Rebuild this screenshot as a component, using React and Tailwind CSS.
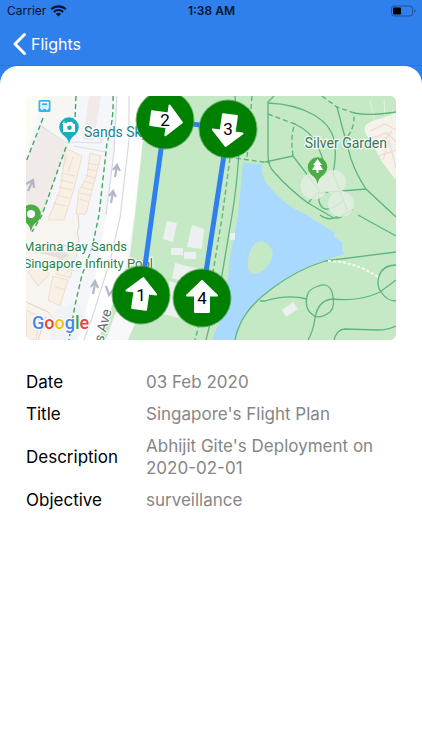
const PATH = "#5fb57f";

function StatusBar() {
  return (
    <div className="grid h-[22px] grid-cols-3 items-center pl-[7px] pr-[6px] text-[12px] text-[#06142b]">
      <div className="flex items-center gap-1">
        <span>Carrier</span>
        <svg width="17" height="12" viewBox="0 0 17 12" fill="none" stroke="#06142b" aria-hidden="true">
          <path d="M1.2 4.3A10.6 10.6 0 0 1 15.8 4.3" strokeWidth="2.1" />
          <path d="M3.8 7A6.8 6.8 0 0 1 13.2 7" strokeWidth="2" />
          <path d="M8.5 11.6L5.9 9A3.8 3.8 0 0 1 11.1 9Z" fill="#06142b" stroke="none" />
        </svg>
      </div>
      <span className="text-center font-semibold">1:38 AM</span>
      <svg className="justify-self-end" width="26" height="12" viewBox="0 0 26 12" aria-hidden="true">
        <rect x="1.500" y="1" width="21" height="10" rx="2.5" fill="none" stroke="#1d519b" />
        <rect x="3" y="2.500" width="8" height="7" rx="1" fill="#000" />
        <path d="M24 4.300v3.400q1.500-.4 1.500-1.700t-1.500-1.700" fill="#1d519b" />
      </svg>
    </div>
  );
}

function Marker({ x, y, angle, label }) {
  return (
    <g transform={`translate(${x} ${y})`}>
      <circle r="29.500" fill="#4d9a4d" opacity=".7" />
      <circle r="28.500" fill="#008000" />
      <path
        d="M0-17L15-2.500H7V14H-7V-2.500H-15Z"
        fill="#fff"
        stroke="#fff"
        strokeWidth="2"
        strokeLinejoin="round"
        transform={`rotate(${angle})`}
      />
      <text y="6" textAnchor="middle" fontSize="17" fill="#000">{label}</text>
    </g>
  );
}

function FlightMap() {
  return (
    <svg
      className="block w-full rounded-[6px] font-[Roboto,sans-serif]"
      viewBox="0 0 370 244"
      role="img"
      aria-label="Map of flight plan"
    >
      <rect width="370" height="244" fill="#f5f6f9" />

      {/* resort blocks */}
      <path d="M0 0H50L40 51L15 30L18 0Z" fill="#f6f7f2" />
      <path d="M16 29L42 50L12 130L0 112V66Z" fill="#f0ebe8" />
      <path d="M63 0H75L68 44H57Z" fill="#f0ebe8" />
      <path d="M17 0L0 60V0Z" fill="#fcfbf4" />
      <path d="M0 135L22 120L52 122L46 165L30 205L20 244H0Z" fill="#f8f5f1" />
      <g fill="#f8f0e4" stroke="#ead9c6" strokeWidth=".8">
        <path d="M40 52L56 60L48 93L38 124H22L34 94Z" />
        <path d="M64 57L75 60L60 118H50L53 94L61 81Z" />
        <path d="M34 148L52 154L44 182L30 178Z" />
        <path d="M27 180L42 184L34 210L22 204Z" />
        <path d="M0 214L14 220L10 244H0ZM2 176L14 168L24 178L12 190Z" />
      </g>
      <path
        d="M41 60L36 74M47 61L42 76M36 77L49 80M34 84L47 87M32 91L46 94M30 99L43 102M27 107L40 110M62 67L72 69M61 73L71 75M59 79L69 82M57 85L68 88M55 91L66 94M54 97L65 100M53 103L63 106M31 162L49 166M29 170L47 174M28 190L39 194"
        fill="none"
        stroke="#e9d9c8"
        strokeWidth=".8"
      />
      <path d="M52 119L53 131L51 136L53 145L49 150M0 206L22 216L30 226L26 244M12 244L20 220" fill="none" stroke="#dcc8bb" strokeWidth=".8" />
      <path d="M6 156L30 150L44 160L36 163L18 158Z" fill="#e6dfd9" />
      <path d="M48 50L80 56M42 46L75 47V42M17 22L15 30L42 48" fill="none" stroke="#d5d5de" strokeWidth=".8" />

      {/* roads */}
      <path d="M91 0H122L108 119L98 175L80 244H52L72 170L80 119L88 56Z" fill="#fff" />
      <path d="M28 214L52 206L60 222L48 244H24Z" fill="#f0f2f6" />
      <path d="M103 0V44L94 122L84 165L66 222L58 244M91 0L88 56L80 119" fill="none" stroke="#d8d8e2" strokeWidth="1.200" />
      <g fill="none" stroke="#b3b5c9" strokeWidth="2.200">
        <path d="M89 81L91 71M87 74L91 69L94 75M85 107L87 97M83 100L87 95L90 101M2 95L6 86M0 88L7 84L8 92M67 198L69 188M65 191L69 185L72 192M80 190L83 199L87 194" />
      </g>

      {/* park */}
      <path d="M121 0H370V244H102L112 220L90 216L80 244H72L98 180L104 159L109 119L117 44Z" fill="#c5e9c5" />
      <path d="M100 218L114 218L101 244H80L89 218Z" fill="#f8f8fa" />
      <path d="M217 67L236 68Q235 84 244 91C254 104 265 112 281 119L309 137L308 141L317 147L316 154L319 158L299 164Q270 174 244 194C224 209 213 224 209 244H186L199 212L204 162L212 119Z" fill="#a9d9ff" />
      <path d="M246 154C240 142 228 141 223 159C219 174 224 180 233 177C241 173 249 162 246 154Z" fill="#c5e9c5" />
      <g fill="#edf0f0">
        <path d="M141 125L151 127L147 146L137 143Z" />
        <path d="M166 129L178 133L176 153L161 151Z" />
        <rect x="145" y="152" width="12" height="7" />
        <rect x="158" y="156" width="12" height="7" />
        <path d="M149 167L177 174L171 189L146 182Z" />
        <path d="M143 185L158 190L152 222L138 218Z" />
        <rect x="204" y="137" width="5" height="7" />
        <path d="M256 214L267 206L272 213L260 221Z" />
      </g>
      <path d="M339 30Q343 25 356 22L370 17V84L356 66L346 46Q337 37 339 30Z" fill="#f4f2e9" />
      <path d="M344 35L359 28L370 34M346 42L361 37L370 46M351 53L366 35M352 60L370 54M357 64L363 45L370 72" fill="none" stroke="#f2d9d5" strokeWidth="1.200" />
      <path d="M344 5L349 25M358 4L359 20M367 12L365 25" stroke="#e7f1d8" fill="none" />

      {/* footpaths */}
      <g fill="none" stroke={PATH} strokeWidth="1.300">
        <path d="M209 0L213 55Q211 90 206 119L196 179L180 244" />
        <path d="M248 0L242 6V59Q242 70 248 76Q264 94 282 107L306 121Q313 124 319 118L327 113" />
        <path d="M242 7Q269 8 288 19Q307 30 309 49Q310 65 307 77L321 114" />
        <path d="M269 28Q285 36 291 48L298 66" />
        <path d="M239 66L267 60L293 94Q291 110 299 113Q307 114 316 105" />
        <path d="M282 107L291 97L340 93M311 11L317 34L325 63Q330 78 340 93L370 121" />
        <path d="M328 17Q344 20 370 16M332 119L370 140M370 156L299 165Q270 174 244 194C224 209 213 224 209 244M294 119Q303 126 312 120" />
        <path d="M234 205L239 205Q262 198 281 203M282 244Q287 236 289 222Q292 204 307 203Q333 206 354 196L370 184" />
        <path d="M281 200Q283 193 290 191Q302 185 306 196Q310 210 304 216Q293 224 287 219Q278 213 281 200Z" />
        <path d="M370 169Q357 169 353 180Q350 191 356 197Q361 205 370 205M308 244Q311 233 319 233L352 234Q361 234 370 230" />
      </g>
      <g fill="none" stroke={PATH} strokeWidth="1.400" strokeDasharray="5 3">
        <path d="M226 0L221 62M204 62L196 122L187 176L169 244M202 61L244 67M242 18L269 28Q264 39 267 60M296 0L311 11L328 17Q329 32 321 41" />
        <path d="M50 0L49 24M40 51L16 119L6 136M17 22L0 66M87 0Q88 25 81 47L73 119L66 152L56 179L49 209L43 244" stroke="#42a863" />
      </g>
      <path d="M302 165Q328 165 352 181" fill="none" stroke="#f8fff2" strokeWidth="2" strokeDasharray="3 2" />
      <g fill="#e3eee1" opacity=".85">
        <circle cx="288" cy="90" r="13.500" />
        <circle cx="308" cy="86" r="12" />
        <circle cx="315" cy="108" r="13" />
      </g>

      {/* places */}
      <rect x="12.500" y="4" width="12" height="12" rx="1.500" fill="#35b4f2" />
      <path d="M15 6.500H22V12H15Z" fill="none" stroke="#fff" strokeWidth="1.400" />
      <path d="M15 10H22M16 12V14M21 12V14" stroke="#fff" strokeWidth="1.400" />
      <path d="M43 48Q42 42 36.500 38.500A9.800 9.800 0 1 1 49.500 38.500Q44 42 43 48Z" fill="#18aebd" />
      <path d="M37 28H40L41.500 26H46L47.500 28H49V36H37Z" fill="#fff" />
      <circle cx="43.500" cy="31.800" r="2.300" fill="#18aebd" />
      <path d="M36 27.500H40M38 25.500V29.500" stroke="#fff" />
      <path d="M5 136Q4 129-1 126A9.800 9.800 0 1 1 11 126Q6 129 5 136Z" fill="#4bad43" />
      <circle cx="5" cy="118" r="4" fill="#fff" />
      <path d="M291.500 88Q290.500 82 285 78.500A9.800 9.800 0 1 1 298 78.500Q292.500 82 291.500 88Z" fill="#4bad43" />
      <path d="M291.500 63L296 69H294L297 74H292.500V77H290.500V74H286L289 69H287Z" fill="#fff" />

      <g fontSize="14" stroke="#fff" strokeWidth="2.500" strokeOpacity=".8" strokeLinejoin="round" paintOrder="stroke" fill="#26844e">
        <text x="58" y="41" fill="#178493">Sands Sky</text>
        <text x="361" y="52" textAnchor="end" fill="#397758">Silver Garden</text>
        <text x="101" y="155" fontSize="13" textAnchor="end">Marina Bay Sands</text>
        <text x="127" y="172" fontSize="13" textAnchor="end">Singapore Infinity Pool</text>
        <text transform="translate(77 247) rotate(-75)" fill="#6a6c74">s Ave</text>
      </g>
      <text x="6" y="233" fontSize="18" fontWeight="500" stroke="#fff" strokeWidth="2" paintOrder="stroke">
        <tspan fill="#4285f4">G</tspan><tspan fill="#ea4335">o</tspan><tspan fill="#fbbc05">o</tspan><tspan fill="#4285f4">g</tspan><tspan fill="#34a853">l</tspan><tspan fill="#ea4335">e</tspan>
      </text>

      {/* flight route */}
      <path d="M115 199L139 24L202 33L176 202" fill="none" stroke="#2f80ed" strokeWidth="5" />
      <Marker x={115} y={199} angle={8} label="1" />
      <Marker x={139} y={24} angle={98} label="2" />
      <Marker x={202} y={33} angle={188} label="3" />
      <Marker x={176} y={202} angle={0} label="4" />
    </svg>
  );
}

const details = [
  ["Date", "03 Feb 2020"],
  ["Title", "Singapore's Flight Plan"],
  ["Description", "Abhijit Gite's Deployment on 2020-02-01"],
  ["Objective", "surveillance"],
];

export default function App() {
  return (
    <div className="flex min-h-screen flex-col bg-[#2f80ed] font-[Inter,'Liberation_Sans',sans-serif]">
      <header className="border-b border-[#2b75d9]">
        <StatusBar />
        <nav className="flex h-[43px] items-center pl-3">
          <button type="button" className="flex items-center gap-1 text-[16px] text-white">
            <svg width="15" height="24" viewBox="0 0 15 24" fill="none" stroke="currentColor" strokeWidth="3" strokeLinecap="round" strokeLinejoin="round" aria-hidden="true">
              <path d="M12.500 2.500L3 12L12.500 21.500" />
            </svg>
            Flights
          </button>
        </nav>
      </header>
      <main className="flex-1 rounded-t-[18px] bg-white px-[26px] pt-[30px]">
        <FlightMap />
        <dl className="mt-[31px] flex flex-col gap-[10px] text-[17px] leading-[22px]">
          {details.map(([label, value]) => (
            <div key={label} className="flex items-center">
              <dt className="w-[120px] shrink-0 text-black">{label}</dt>
              <dd className="flex-1 text-[#868686]">{value}</dd>
            </div>
          ))}
        </dl>
      </main>
    </div>
  );
}
